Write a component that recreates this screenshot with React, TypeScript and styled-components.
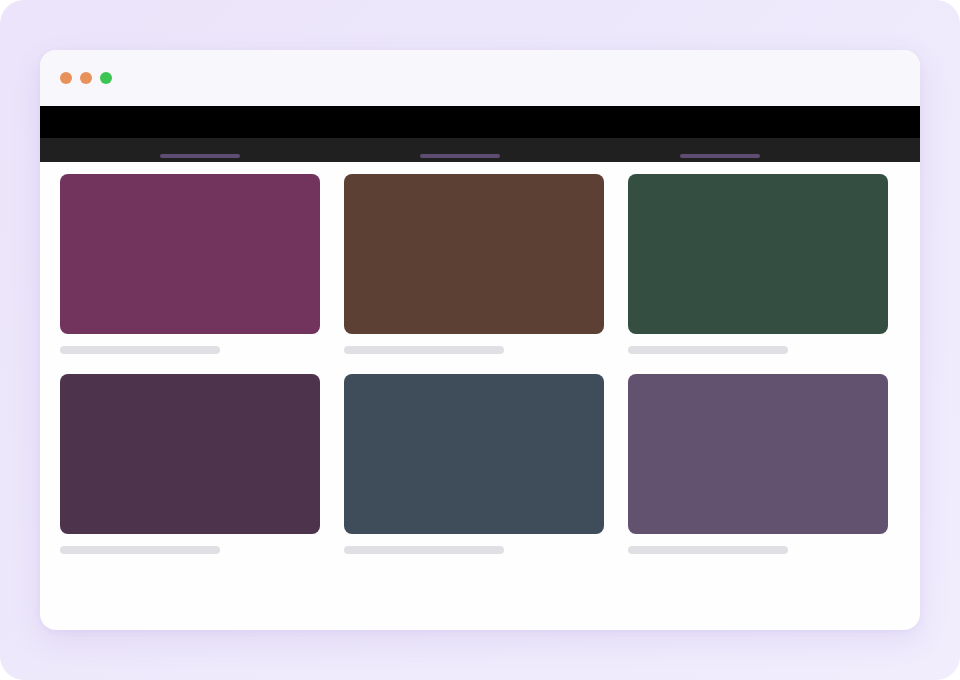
import React from "react";
import styled, { createGlobalStyle } from "styled-components";

const Global = createGlobalStyle`
  html, body { margin: 0; padding: 0; background: #ffffff; }
  body { font-family: "Inter", "Liberation Sans", sans-serif; }
  * { box-sizing: border-box; }
`;

const Stage = styled.div`
  width: 960px;
  height: 680px;
  border-radius: 24px;
  overflow: hidden;
  background: linear-gradient(135deg, #ebe4fa 0%, #eee9fb 55%, #f1edfd 100%);
  padding: 50px 40px;
`;

const Window = styled.div`
  width: 880px;
  height: 580px;
  border-radius: 16px;
  overflow: hidden;
  background: #fefefe;
  box-shadow: 0 10px 30px rgba(120, 90, 200, 0.12), 0 2px 6px rgba(120, 90, 200, 0.06);
  display: flex;
  flex-direction: column;
`;

const TitleBar = styled.div`
  height: 56px;
  background: #f8f7fc;
  display: flex;
  align-items: center;
  gap: 8px;
  padding: 0 20px;
`;

const Dot = styled.span<{ $color: string }>`
  width: 12px;
  height: 12px;
  border-radius: 50%;
  background: ${(p) => p.$color};
`;

const TopBar = styled.div`
  height: 32px;
  background: #000000;
`;

const TabBar = styled.div`
  height: 24px;
  background: #202020;
  display: grid;
  grid-template-columns: repeat(3, 260px);
  padding-left: 30px;
`;

const Tab = styled.div`
  display: flex;
  justify-content: center;
  align-items: flex-end;
  padding-bottom: 4px;
`;

const TabLine = styled.span`
  width: 80px;
  height: 4px;
  border-radius: 2px;
  background: #5f4c72;
`;

const Grid = styled.div`
  display: grid;
  grid-template-columns: repeat(3, 260px);
  column-gap: 24px;
  row-gap: 20px;
  padding: 12px 20px;
`;

const Card = styled.div`
  display: flex;
  flex-direction: column;
  gap: 12px;
`;

const Thumb = styled.div<{ $color: string }>`
  height: 160px;
  border-radius: 8px;
  background: ${(p) => p.$color};
`;

const Caption = styled.div`
  width: 160px;
  height: 8px;
  border-radius: 4px;
  background: #e0dfe4;
`;

const swatches = ["#72345d", "#5b4033", "#344f42", "#4e334d", "#3f4d5a", "#63526f"];

export default function App() {
  return (
    <>
      <Global />
      <Stage>
        <Window>
          <TitleBar>
            <Dot $color="#e8915a" />
            <Dot $color="#e8915a" />
            <Dot $color="#3cc552" />
          </TitleBar>
          <TopBar />
          <TabBar>
            {[0, 1, 2].map((i) => (
              <Tab key={i}>
                <TabLine />
              </Tab>
            ))}
          </TabBar>
          <Grid>
            {swatches.map((c) => (
              <Card key={c}>
                <Thumb $color={c} />
                <Caption />
              </Card>
            ))}
          </Grid>
        </Window>
      </Stage>
    </>
  );
}
